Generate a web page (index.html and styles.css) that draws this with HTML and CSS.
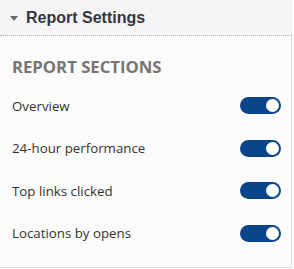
FILE: index.html
```html
<!DOCTYPE html>
<html>
<head>
<meta charset="utf-8">
<link rel="stylesheet" href="styles.css">
</head>
<body>
<div class="panel">
  <div class="panel-header">
    <span class="caret"></span>
    <span class="panel-title">Report Settings</span>
  </div>
  <div class="panel-body">
    <h3 class="section-title">REPORT SECTIONS</h3>
    <div class="rows">
      <div class="row"><span class="label">Overview</span><span class="toggle"><span class="knob"></span></span></div>
      <div class="row"><span class="label">24-hour performance</span><span class="toggle"><span class="knob"></span></span></div>
      <div class="row"><span class="label">Top links clicked</span><span class="toggle"><span class="knob"></span></span></div>
      <div class="row"><span class="label">Locations by opens</span><span class="toggle"><span class="knob"></span></span></div>
    </div>
  </div>
</div>
</body>
</html>
```
FILE: styles.css
```css
html, body {
  margin: 0;
  padding: 0;
  background: #ffffff;
}
.panel {
  width: 292px;
  height: 268px;
  box-sizing: border-box;
  border-right: 1px solid #dcdcdc;
  border-bottom: 1px solid #dcdcdc;
  background: #fbfbfb;
}
.panel-header {
  height: 35px;
  border-bottom: 1px dotted #b0b0b0;
  background: #f5f5f5;
  display: flex;
  align-items: center;
  padding-left: 10px;
  margin-right: -1px;
}
.caret {
  width: 0;
  height: 0;
  border-left: 4px solid transparent;
  border-right: 4px solid transparent;
  border-top: 5px solid #6a6a6a;
  margin-right: 8px;
  margin-top: 1px;
}
.panel-title {
  font-family: "Liberation Sans", Arial, sans-serif;
  font-weight: bold;
  font-size: 16px;
  color: #353540;
  line-height: 35px;
}
.panel-body {
  padding: 20px 10px 0 12px;
}
.section-title {
  margin: 0;
  font-family: "Open Sans", sans-serif;
  font-weight: bold;
  font-size: 16.7px;
  line-height: 22px;
  color: #757575;
}
.rows {
  margin-top: 19px;
  display: flex;
  flex-direction: column;
  gap: 25.6px;
}
.row {
  height: 17px;
  display: flex;
  align-items: center;
  justify-content: space-between;
}
.label {
  font-family: "Open Sans", sans-serif;
  font-size: 13.3px;
  color: #333333;
}
.toggle {
  width: 41px;
  height: 17px;
  border-radius: 9px;
  background: #0b4589;
  display: flex;
  align-items: center;
  justify-content: flex-end;
  padding-right: 2px;
  box-sizing: border-box;
}
.knob {
  width: 13px;
  height: 13px;
  border-radius: 50%;
  background: #ffffff;
}
```
